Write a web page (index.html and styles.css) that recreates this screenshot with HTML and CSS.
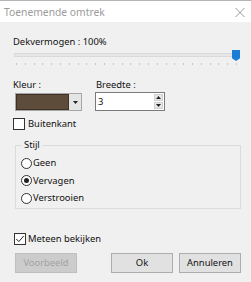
FILE: index.html
```html
<!DOCTYPE html>
<html lang="nl">
<head>
    <meta charset="UTF-8">
    <title>Toenemende omtrek</title>
    <link rel="stylesheet" href="styles.css">
</head>
<body>
    <div class="dialog">
        <div class="titlebar">
            <span class="title">Toenemende omtrek</span>
            <svg class="close" width="10" height="9" viewBox="0 0 10 9"><path d="M0.5 0L9.5 9M9.5 0L0.5 9" stroke="#8c8c8c" stroke-width="0.9"/></svg>
        </div>
        <div class="content">
            <div class="label">Dekvermogen : 100%</div>
            <div class="slider">
                <div class="track"></div>
                <div class="thumb"></div>
                <div class="ticks"></div>
            </div>

            <div class="row">
                <div class="field">
                    <div class="label">Kleur :</div>
                    <div class="combo">
                        <span class="swatch"></span>
                        <span class="drop"><svg width="5" height="3" viewBox="0 0 5 3"><path d="M0 0H5L2.5 3Z" fill="#222"/></svg></span>
                    </div>
                </div>
                <div class="field">
                    <div class="label">Breedte :</div>
                    <div class="spin">
                        <span class="spin-val">3</span>
                        <span class="spin-btns">
                            <span class="spin-btn"><svg width="5" height="3" viewBox="0 0 5 3"><path d="M0 3H5L2.5 0Z" fill="#222"/></svg></span>
                            <span class="spin-btn"><svg width="5" height="3" viewBox="0 0 5 3"><path d="M0 0H5L2.5 3Z" fill="#222"/></svg></span>
                        </span>
                    </div>
                </div>
            </div>

            <div class="check outer"><span class="box"></span>Buitenkant</div>

            <div class="group">
                <div class="legend">Stijl</div>
                <div class="radio"><span class="circle"></span>Geen</div>
                <div class="radio"><span class="circle on"></span>Vervagen</div>
                <div class="radio"><span class="circle"></span>Verstrooien</div>
            </div>

            <div class="check preview"><span class="box"><svg width="10" height="10" viewBox="0 0 10 10"><path d="M1.3 5L3.8 7.6L8.7 2" stroke="#222" stroke-width="1" fill="none"/></svg></span>Meteen bekijken</div>

            <div class="buttons">
                <button class="btn disabled">Voorbeeld</button>
                <span class="spacer"></span>
                <button class="btn">Ok</button>
                <button class="btn">Annuleren</button>
            </div>
        </div>
    </div>
</body>
</html>
```
FILE: styles.css
```css
body{
    margin: 0; background: #f0f0f0;
    font-family: "Noto Sans", "Liberation Sans", sans-serif; font-size: 9.4px; line-height: 12px; color: #111;
}
.dialog{
    width: 251px; height: 282px; box-sizing: border-box;
    background: #f0f0f0; border-top: 1px solid #b4b4b4;
}
.titlebar{
    height: 21px; background: #fff;
    display: flex; align-items: center; justify-content: space-between;
    padding: 0 6px 0 4px;
}
.title{ color: #9b9b9b; font-size: 10.3px; }
.close{ margin-top: 2px; }
.content{ padding: 14px 10px 0 13px; }
.label{ height: 12px; }

/* schuifbalk */
.slider{ position: relative; height: 18px; }
.track{
    position: absolute; left: 1px; right: 4px; top: 5px; height: 2px;
    background: #e7e7e7; border: 1px solid #d9d9d9;
}
.thumb{
    position: absolute; right: 1px; top: 2px; width: 8px; height: 11px;
    background: #1a7fd4;
    clip-path: polygon(0 0, 100% 0, 100% 75%, 50% 100%, 0 75%);
}
.ticks{
    position: absolute; left: 3px; right: 4px; top: 15px; height: 2px;
    background: repeating-linear-gradient(to right, #c6c6c6 0 1px, transparent 1px 8.8px);
}

.row{ display: flex; gap: 14px; margin-top: 13px; }
.field{ display: flex; flex-direction: column; }
.combo{
    width: 67px; height: 18px; box-sizing: border-box; margin: 2px 0 0 2px;
    border: 1px solid #a6a6a6; background: #e5e5e5;
    display: flex;
}
.swatch{ width: 51px; background: #5e4c3b; border: 1px solid #3d3128; }
.drop{ flex: 1; display: flex; align-items: center; justify-content: center; }
.spin{
    width: 70px; height: 19px; box-sizing: border-box; margin: 1px 0 0 -1px;
    border: 1px solid #7a7a7a; background: #fff;
    display: flex; align-items: center;
}
.spin-val{ flex: 1; padding-left: 2px; }
.spin-btns{ display: flex; flex-direction: column; gap: 1px; width: 10px; height: 100%; padding: 1px 1px 1px 0; box-sizing: border-box; }
.spin-btn{ flex: 1; display: flex; align-items: center; justify-content: center; background: #e6e6e6; border: 1px solid #d0d0d0; }

.check{ display: flex; align-items: center; gap: 3px; height: 12px; }
.box{
    width: 12px; height: 12px; box-sizing: border-box;
    border: 1px solid #333; background: #fff;
    display: flex; align-items: center; justify-content: center;
}
.outer{ margin-top: 7px; }

.group{
    position: relative; margin: 15px 0 0 2px; height: 64px; box-sizing: border-box;
    border: 1px solid #dcdcdc; padding: 11px 0 0 5px;
    display: flex; flex-direction: column; gap: 5.5px;
}
.legend{
    position: absolute; left: 6px; top: -7px; padding: 0 2px; background: #f0f0f0;
}
.radio{ display: flex; align-items: center; gap: 1px; height: 12px; }
.circle{
    width: 11px; height: 11px; box-sizing: border-box;
    border: 1px solid #333; border-radius: 50%; background: #fff;
    display: flex; align-items: center; justify-content: center;
}
.circle.on::after{ content: ""; width: 5px; height: 5px; border-radius: 50%; background: #222; }

.preview{ margin: 24px 0 0 1px; gap: 2px; }

.buttons{ display: flex; gap: 6px; margin: 8px 0 0 2px; }
.spacer{ flex: 1; }
.btn{
    width: 62px; height: 20px; box-sizing: border-box;
    font: inherit; color: #111;
    background: #e1e1e1; border: 1px solid #adadad; padding: 0;
}
.btn.disabled{ color: #a3a3a3; background: #cccccc; border-color: #bfbfbf; }
```
